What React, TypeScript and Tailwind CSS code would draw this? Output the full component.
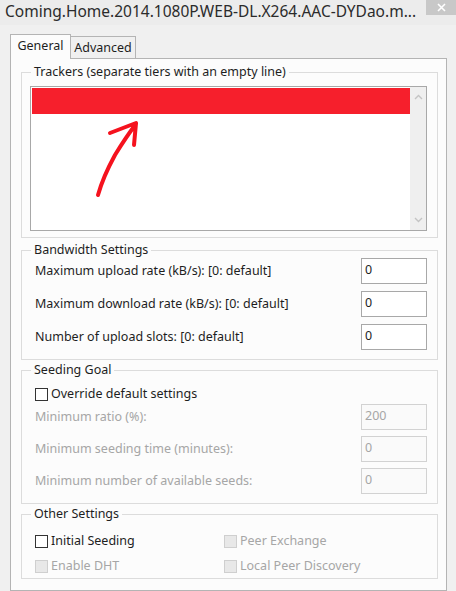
import type { ReactNode } from "react";

// Torrent options dialog: "General" tab
function Group({ title, children }: { title: string; children: ReactNode }) {
  return (
    <fieldset className="ml-[10px] w-[417px] border border-[#dcdcdc]">
      <legend className="ml-[9px] px-[3px] text-[12.5px] leading-[16px] text-[#1e1e1e]">{title}</legend>
      {children}
    </fieldset>
  );
}

function NumberBox({ value, disabled = false }: { value: string; disabled?: boolean }) {
  return (
    <div
      className={`w-[66px] h-[26px] border pl-[3px] pt-[3px] text-[12.5px] leading-[16px] ${
        disabled ? "border-[#d2d2d2] bg-[#fafafa] text-[#a6a6a6]" : "border-[#a8a8a8] bg-white text-[#1e1e1e]"
      }`}
    >
      {value}
    </div>
  );
}

function Check({ label, disabled = false }: { label: string; disabled?: boolean }) {
  return (
    <label className="flex items-center gap-[3px] h-[16px]">
      <span
        className={`w-[13px] h-[13px] border ${
          disabled ? "border-[#cfcfcf] bg-[#e8e8e8]" : "border-[#333333] bg-white"
        }`}
      />
      <span className={`text-[12.5px] leading-[16px] ${disabled ? "text-[#a6a6a6]" : "text-[#1e1e1e]"}`}>{label}</span>
    </label>
  );
}

function Row({ label, value, disabled = false }: { label: string; value: string; disabled?: boolean }) {
  return (
    <div className="flex items-center justify-between">
      <span className={`text-[12.5px] leading-[16px] ${disabled ? "text-[#a6a6a6]" : "text-[#1e1e1e]"}`}>{label}</span>
      <NumberBox value={value} disabled={disabled} />
    </div>
  );
}

export default function App() {
  return (
    <div className="w-[456px] h-[591px] overflow-hidden bg-[#f0f0f0] font-['Noto_Sans','DejaVu_Sans',sans-serif] flex flex-col">
      {/* title bar */}
      <div className="flex items-start h-[25px] bg-[#ececec] shrink-0">
        <div className="pl-[5px] text-[15.5px] leading-[22px] text-[#2b2b2b] whitespace-nowrap">
          Coming.Home.2014.1080P.WEB-DL.X264.AAC-DYDao.m...
        </div>
        <div className="ml-auto w-[30px] h-[15px] bg-[#c8c8c8] flex items-center justify-center">
          <svg width="9" height="9" viewBox="0 0 9 9">
            <path d="M1 1 L8 8 M8 1 L1 8" stroke="#ffffff" strokeWidth="1.6" />
          </svg>
        </div>
      </div>

      {/* tabs */}
      <div className="flex items-end h-[33px] pl-[10px] shrink-0">
        <div className="relative z-10 -mb-px h-[25px] w-[61px] border border-b-0 border-[#b4b4b4] bg-[#fcfcfc] text-[12.5px] leading-[22px] text-[#1e1e1e] text-center">
          General
        </div>
        <div className="-ml-px h-[22px] w-[66px] border border-b-0 border-[#b4b4b4] bg-[#f0f0f0] text-[12.5px] leading-[22px] text-[#1e1e1e] text-center">
          Advanced
        </div>
      </div>

      {/* tab page */}
      <div className="ml-[10px] w-[437px] flex-1 border border-[#b4b4b4] bg-[#fcfcfc] pt-[5px] flex flex-col">
        <Group title="Trackers (separate tiers with an empty line)">
          <div className="pl-[8px] pr-[10px] pt-[6px] pb-[6px]">
            <div className="relative h-[145px] border border-[#a8a8a8] bg-white flex">
              <div className="flex-1 pl-[1px] pt-[1px]">
                <div className="h-[26px] bg-[#f61f2c]" />
              </div>
              <div className="w-[16px] bg-[#efefef] flex flex-col items-center justify-between py-[7px]">
                <svg width="9" height="6" viewBox="0 0 9 6">
                  <path d="M1 5 L4.5 1.5 L8 5" stroke="#c4c4c4" strokeWidth="1.4" fill="none" />
                </svg>
                <svg width="9" height="6" viewBox="0 0 9 6">
                  <path d="M1 1 L4.5 4.5 L8 1" stroke="#c4c4c4" strokeWidth="1.4" fill="none" />
                </svg>
              </div>
              {/* hand-drawn pointer */}
              <svg className="absolute left-0 top-0" width="140" height="120" viewBox="0 0 140 120">
                <path
                  d="M67 108 Q72 90 84 68 Q95 50 105 37 M79 46 L105 36 L103 58"
                  stroke="#f5121e"
                  strokeWidth="4"
                  strokeLinecap="round"
                  strokeLinejoin="round"
                  fill="none"
                />
              </svg>
            </div>
          </div>
        </Group>

        <div className="mt-[4px]">
          <Group title="Bandwidth Settings">
            <div className="pl-[13px] pr-[10px] pb-[9px] flex flex-col gap-[7px]">
              <Row label="Maximum upload rate (kB/s): [0: default]" value="0" />
              <Row label="Maximum download rate (kB/s): [0: default]" value="0" />
              <Row label="Number of upload slots: [0: default]" value="0" />
            </div>
          </Group>
        </div>

        <div className="mt-[2px]">
          <Group title="Seeding Goal">
            <div className="pl-[13px] pr-[10px] pt-[8px] pb-[9px] flex flex-col gap-[6px]">
              <div className="-mb-[4px]">
                <Check label="Override default settings" />
              </div>
              <Row label="Minimum ratio (%):" value="200" disabled />
              <Row label="Minimum seeding time (minutes):" value="0" disabled />
              <Row label="Minimum number of available seeds:" value="0" disabled />
            </div>
          </Group>
        </div>

        <div className="mt-[2px]">
          <Group title="Other Settings">
            <div className="pl-[13px] pr-[10px] pt-[11px] pb-[4px] grid grid-cols-[189px_1fr] gap-y-[9px]">
              <Check label="Initial Seeding" />
              <Check label="Peer Exchange" disabled />
              <Check label="Enable DHT" disabled />
              <Check label="Local Peer Discovery" disabled />
            </div>
          </Group>
        </div>
      </div>
    </div>
  );
}
